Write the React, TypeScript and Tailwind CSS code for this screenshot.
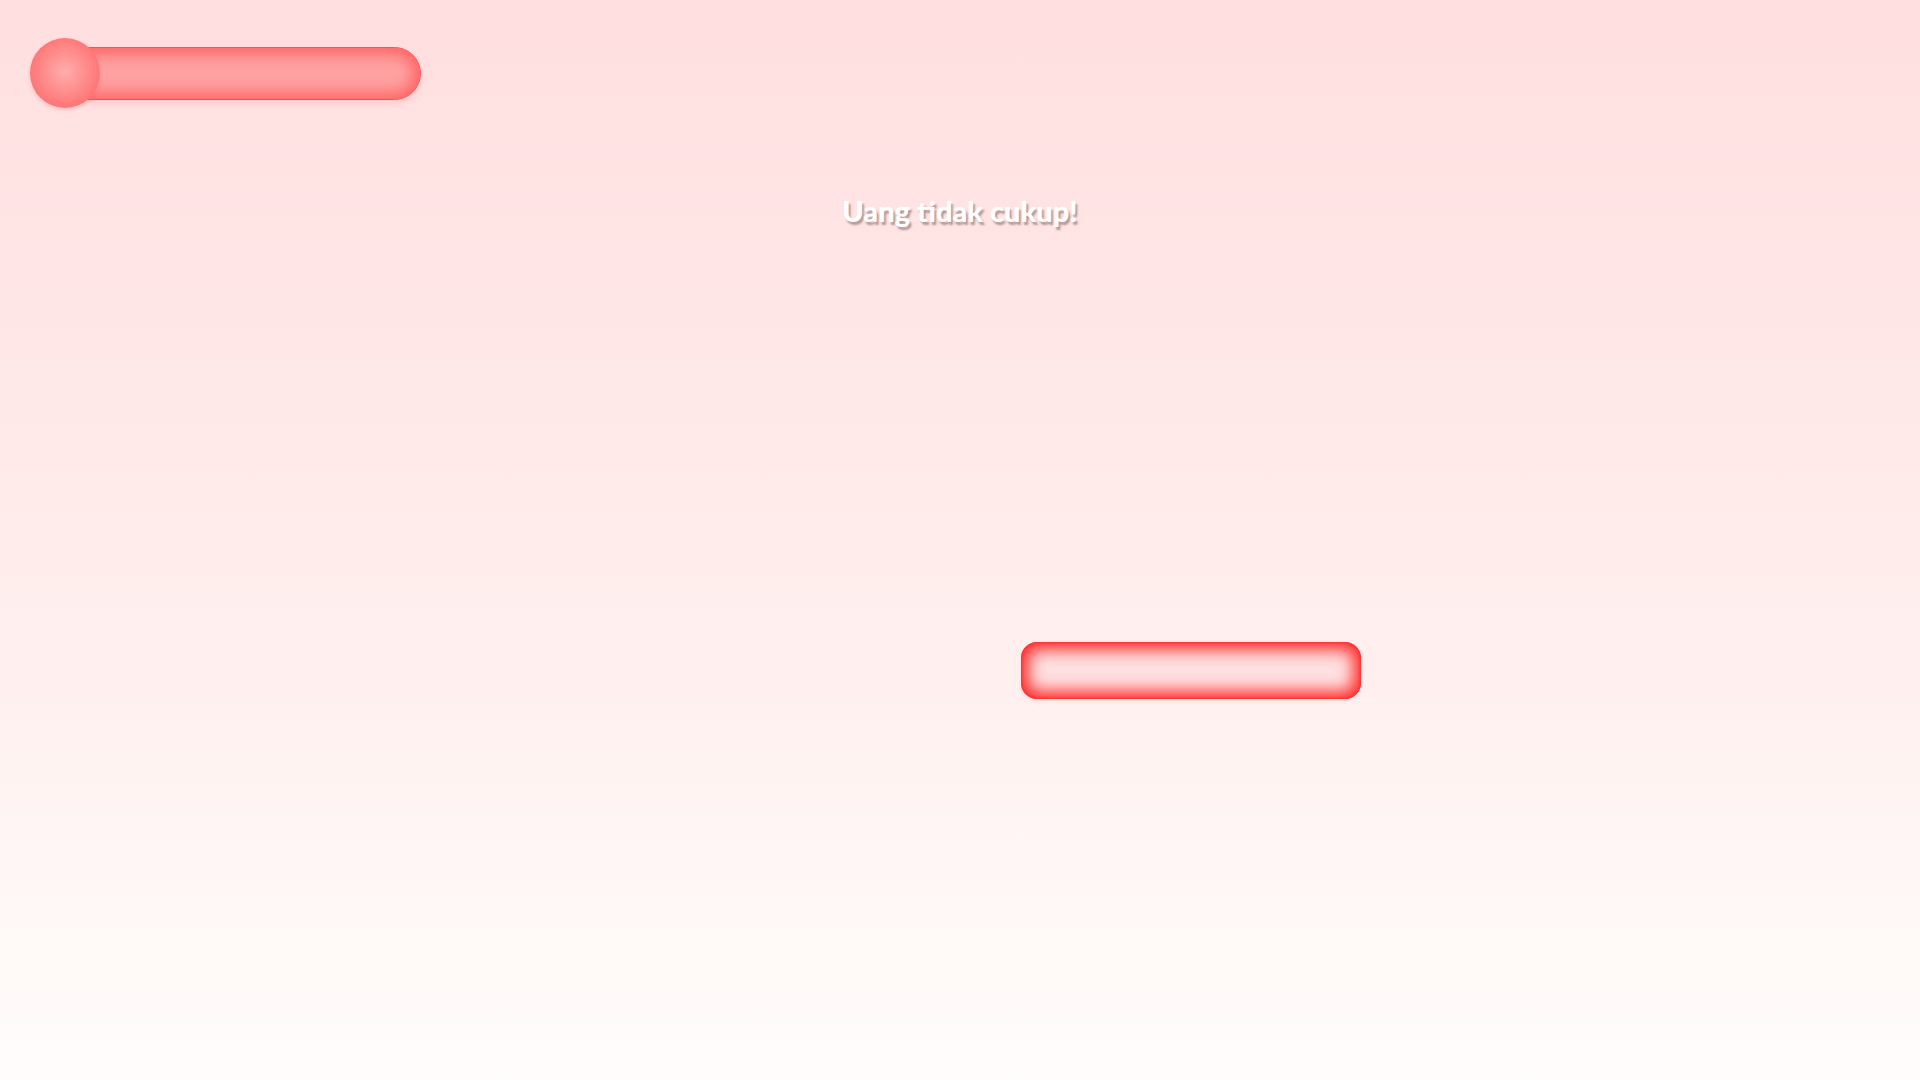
import React from "react";

export default function App() {
  return (
    <div className="relative min-h-screen w-full overflow-hidden bg-gradient-to-b from-[#ffdfe0] via-[#ffeceb] to-[#fffdfc] pt-[38px]">
      <div className="flex h-[70px] items-center pl-[30px]">
        <div className="relative z-10 h-[70px] w-[70px] rounded-full bg-[radial-gradient(circle_at_50%_48%,#ffadad_0%,#ff8a8a_45%,#ff5e5e_100%)] shadow-[0_2px_4px_rgba(255,90,90,0.25)]" />
        <div className="-ml-[40px] h-[53px] w-[361px] rounded-r-full border border-[#ff5050] bg-[#ffa2a2] shadow-[inset_0_0_16px_6px_#ff6262,0_3px_6px_rgba(255,120,120,0.25)]" />
      </div>
      <div className="mt-[85px] flex justify-center">
        <span
          className="text-[29px] leading-[35px] font-black text-white [text-shadow:2px_3px_2px_rgba(90,60,60,0.45)]"
          style={{ fontFamily: "Lato, 'Open Sans', sans-serif" }}
        >
          Uang tidak cukup!
        </span>
      </div>
      <div className="mt-[414px] ml-[1021px] h-[57px] w-[340px] rounded-[16px] bg-[#ffe0e0] shadow-[inset_0_0_16px_8px_#ff2e2e,inset_0_0_3px_1px_#ff2424,0_2px_4px_rgba(255,100,100,0.15)]" />
    </div>
  );
}
